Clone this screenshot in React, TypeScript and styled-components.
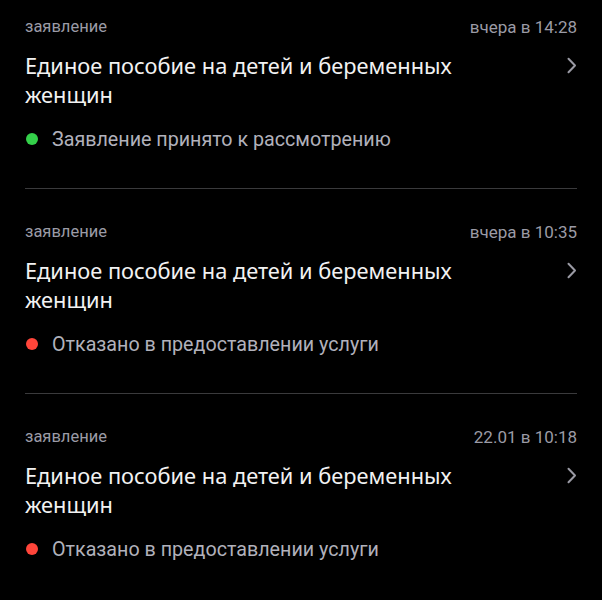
import styled, { createGlobalStyle } from "styled-components";

const GlobalStyle = createGlobalStyle`
    html, body {
        margin: 0;
        padding: 0;
        background: #000;
    }
    body {
        font-family: "Noto Sans", Roboto, sans-serif;
        -webkit-font-smoothing: antialiased;
    }
`;

const List = styled.div`
    width: 602px;
    height: 600px;
    overflow: hidden;
    background: #000;
`;

const Inner = styled.div`
    margin-top: -16px;
    padding: 0 25px;
`;

const Item = styled.div`
    padding: 32px 0 37px;
    border-bottom: 1px solid #3a3a3c;

    &:last-child {
        border-bottom: none;
    }
`;

const Meta = styled.div`
    display: flex;
    justify-content: space-between;
    align-items: center;
    height: 20px;
    line-height: 20px;
    padding-top: 1px;
`;

const Kind = styled.span`
    font-family: Roboto, sans-serif;
    font-size: 16.5px;
    color: #9b9ba6;
`;

const Time = styled.span`
    font-family: Roboto, sans-serif;
    font-size: 17px;
    color: #9b9ba6;
`;

const TitleRow = styled.div`
    display: flex;
    justify-content: space-between;
    align-items: flex-start;
    margin-top: 14px;
`;

const Title = styled.div`
    font-family: "Noto Sans", sans-serif;
    font-size: 21.8px;
    line-height: 29px;
    color: #f2f2f2;
    max-width: 480px;
`;

const Chevron = styled.svg`
    width: 12px;
    height: 17px;
    margin-top: 6px;
    margin-right: -1px;
    flex-shrink: 0;
`;

const Status = styled.div`
    display: flex;
    align-items: center;
    gap: 14px;
    margin-top: 18px;
    height: 24px;
    font-family: Roboto, sans-serif;
    font-size: 19.7px;
    color: #b1b1bb;
`;

const Dot = styled.span<{ $color: string }>`
    width: 12px;
    height: 12px;
    margin-left: 1px;
    border-radius: 50%;
    background: ${({ $color }) => $color};
    flex-shrink: 0;
`;

type Entry = {
    time: string;
    status: string;
    ok: boolean;
};

const entries: Entry[] = [
    { time: "вчера в 14:28", status: "Заявление принято к рассмотрению", ok: true },
    { time: "вчера в 10:35", status: "Отказано в предоставлении услуги", ok: false },
    { time: "22.01 в 10:18", status: "Отказано в предоставлении услуги", ok: false },
];

const App = () => {
    return (
        <List>
            <GlobalStyle />
            <Inner>
                {entries.map((e, i) => (
                    <Item key={i}>
                        <Meta>
                            <Kind>заявление</Kind>
                            <Time>{e.time}</Time>
                        </Meta>
                        <TitleRow>
                            <Title>Единое пособие на детей и беременных женщин</Title>
                            <Chevron viewBox="0 0 12 17">
                                <path
                                    d="M2.5 1.8 L9 8.5 L2.5 15.2"
                                    fill="none"
                                    stroke="#9a9aa4"
                                    strokeWidth="2"
                                    strokeLinecap="round"
                                    strokeLinejoin="round"
                                />
                            </Chevron>
                        </TitleRow>
                        <Status>
                            <Dot $color={e.ok ? "#34d04a" : "#ff453a"} />
                            {e.status}
                        </Status>
                    </Item>
                ))}
            </Inner>
        </List>
    );
};

export default App;
